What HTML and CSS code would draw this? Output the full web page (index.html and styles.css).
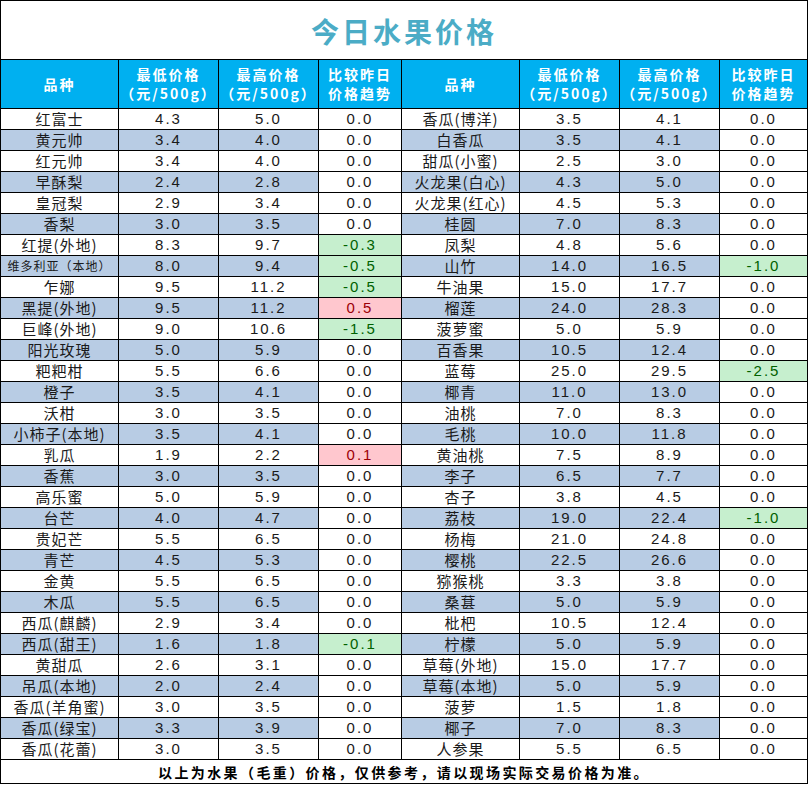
FILE: index.html
```html
<!DOCTYPE html>
<html lang="zh-CN">
<head>
<meta charset="utf-8">
<title>今日水果价格</title>
<link rel="stylesheet" href="styles.css">
</head>
<body>
<table class="price-table">
  <colgroup>
    <col class="c-name"><col class="c-num"><col class="c-num"><col class="c-trend">
    <col class="c-name"><col class="c-num"><col class="c-num"><col class="c-trend2">
  </colgroup>
  <thead>
    <tr class="title-row"><td colspan="8" class="title">今日水果价格</td></tr>
    <tr class="head-row">
      <th>品种</th><th>最低价格<br>（元/500g）</th><th>最高价格<br>（元/500g）</th><th>比较昨日<br>价格趋势</th>
      <th>品种</th><th>最低价格<br>（元/500g）</th><th>最高价格<br>（元/500g）</th><th>比较昨日<br>价格趋势</th>
    </tr>
  </thead>
  <tbody id="rows"></tbody>
  <tfoot>
    <tr class="foot-row"><td colspan="8" class="foot">以上为水果（毛重）价格，仅供参考，请以现场实际交易价格为准。</td></tr>
  </tfoot>
</table>
<script src="app.js"></script>
</body>
</html>
```

FILE: styles.css
```css
html, body {
  margin: 0;
  padding: 0;
  background: #ffffff;
}
.price-table {
  border-collapse: collapse;
  table-layout: fixed;
  width: 807px;
  font-family: "Noto Sans CJK SC", "Liberation Sans", sans-serif;
  color: #1a1a1a;
}
.c-name { width: 118px; }
.c-num { width: 100px; }
.c-trend { width: 83px; }
.c-trend2 { width: 88px; }
.price-table td, .price-table th {
  border: 1px solid #000;
  padding: 0;
  text-align: center;
  vertical-align: middle;
  overflow: hidden;
  white-space: nowrap;
}
.title-row td { height: 56px; }
.title {
  font-size: 28px;
  font-weight: 700;
  color: #4bacc6;
  letter-spacing: 3px;
  line-height: 1;
  padding-top: 2px !important;
}
.head-row th {
  height: 48px;
  background: #00b0f0;
  color: #ffffff;
  font-size: 14px;
  font-weight: 700;
  letter-spacing: 2px;
  line-height: 19px;
}
.data-row td {
  height: 20px;
  font-size: 15px;
  line-height: 18px;
  letter-spacing: 1px;
}
.data-row .num {
  font-family: "Liberation Sans", sans-serif;
  font-size: 15px;
  letter-spacing: 2px;
}
.data-row .name-sm {
  font-size: 12px;
  letter-spacing: 1px;
}
.data-row.stripe .sh { background: #b8cce4; }
.data-row .down { background: #c6efce; color: #006100; }
.data-row .up { background: #ffc7ce; color: #9c0006; }
.foot-row td {
  height: 23px;
  font-size: 14px;
  line-height: 18px;
  font-weight: 700;
  letter-spacing: 2.4px;
  color: #000;
}
```

FILE: app.js
```js
const left = [
  ["红富士","4.3","5.0","0.0"],["黄元帅","3.4","4.0","0.0"],["红元帅","3.4","4.0","0.0"],
  ["早酥梨","2.4","2.8","0.0"],["皇冠梨","2.9","3.4","0.0"],["香梨","3.0","3.5","0.0"],
  ["红提(外地)","8.3","9.7","-0.3"],["维多利亚（本地）","8.0","9.4","-0.5"],["乍娜","9.5","11.2","-0.5"],
  ["黑提(外地)","9.5","11.2","0.5"],["巨峰(外地)","9.0","10.6","-1.5"],["阳光玫瑰","5.0","5.9","0.0"],
  ["粑粑柑","5.5","6.6","0.0"],["橙子","3.5","4.1","0.0"],["沃柑","3.0","3.5","0.0"],
  ["小柿子(本地)","3.5","4.1","0.0"],["乳瓜","1.9","2.2","0.1"],["香蕉","3.0","3.5","0.0"],
  ["高乐蜜","5.0","5.9","0.0"],["台芒","4.0","4.7","0.0"],["贵妃芒","5.5","6.5","0.0"],
  ["青芒","4.5","5.3","0.0"],["金黄","5.5","6.5","0.0"],["木瓜","5.5","6.5","0.0"],
  ["西瓜(麒麟)","2.9","3.4","0.0"],["西瓜(甜王)","1.6","1.8","-0.1"],["黄甜瓜","2.6","3.1","0.0"],
  ["吊瓜(本地)","2.0","2.4","0.0"],["香瓜(羊角蜜)","3.0","3.5","0.0"],["香瓜(绿宝)","3.3","3.9","0.0"],
  ["香瓜(花蕾)","3.0","3.5","0.0"]
];
const right = [
  ["香瓜(博洋)","3.5","4.1","0.0"],["白香瓜","3.5","4.1","0.0"],["甜瓜(小蜜)","2.5","3.0","0.0"],
  ["火龙果(白心)","4.3","5.0","0.0"],["火龙果(红心)","4.5","5.3","0.0"],["桂圆","7.0","8.3","0.0"],
  ["凤梨","4.8","5.6","0.0"],["山竹","14.0","16.5","-1.0"],["牛油果","15.0","17.7","0.0"],
  ["榴莲","24.0","28.3","0.0"],["菠萝蜜","5.0","5.9","0.0"],["百香果","10.5","12.4","0.0"],
  ["蓝莓","25.0","29.5","-2.5"],["椰青","11.0","13.0","0.0"],["油桃","7.0","8.3","0.0"],
  ["毛桃","10.0","11.8","0.0"],["黄油桃","7.5","8.9","0.0"],["李子","6.5","7.7","0.0"],
  ["杏子","3.8","4.5","0.0"],["荔枝","19.0","22.4","-1.0"],["杨梅","21.0","24.8","0.0"],
  ["樱桃","22.5","26.6","0.0"],["猕猴桃","3.3","3.8","0.0"],["桑葚","5.0","5.9","0.0"],
  ["枇杷","10.5","12.4","0.0"],["柠檬","5.0","5.9","0.0"],["草莓(外地)","15.0","17.7","0.0"],
  ["草莓(本地)","5.0","5.9","0.0"],["菠萝","1.5","1.8","0.0"],["椰子","7.0","8.3","0.0"],
  ["人参果","5.5","6.5","0.0"]
];
function cells(r) {
  const t = parseFloat(r[3]);
  const cls = t < 0 ? "num down" : (t > 0 ? "num up" : "num");
  const nameCls = r[0].length > 7 ? "sh name-sm" : "sh";
  return `<td class="${nameCls}">${r[0]}</td><td class="sh num">${r[1]}</td><td class="sh num">${r[2]}</td><td class="${cls}">${r[3]}</td>`;
}
const body = document.getElementById("rows");
body.innerHTML = left.map((r, i) =>
  `<tr class="data-row${i % 2 === 1 ? " stripe" : ""}">${cells(r)}${cells(right[i])}</tr>`
).join("");
```
